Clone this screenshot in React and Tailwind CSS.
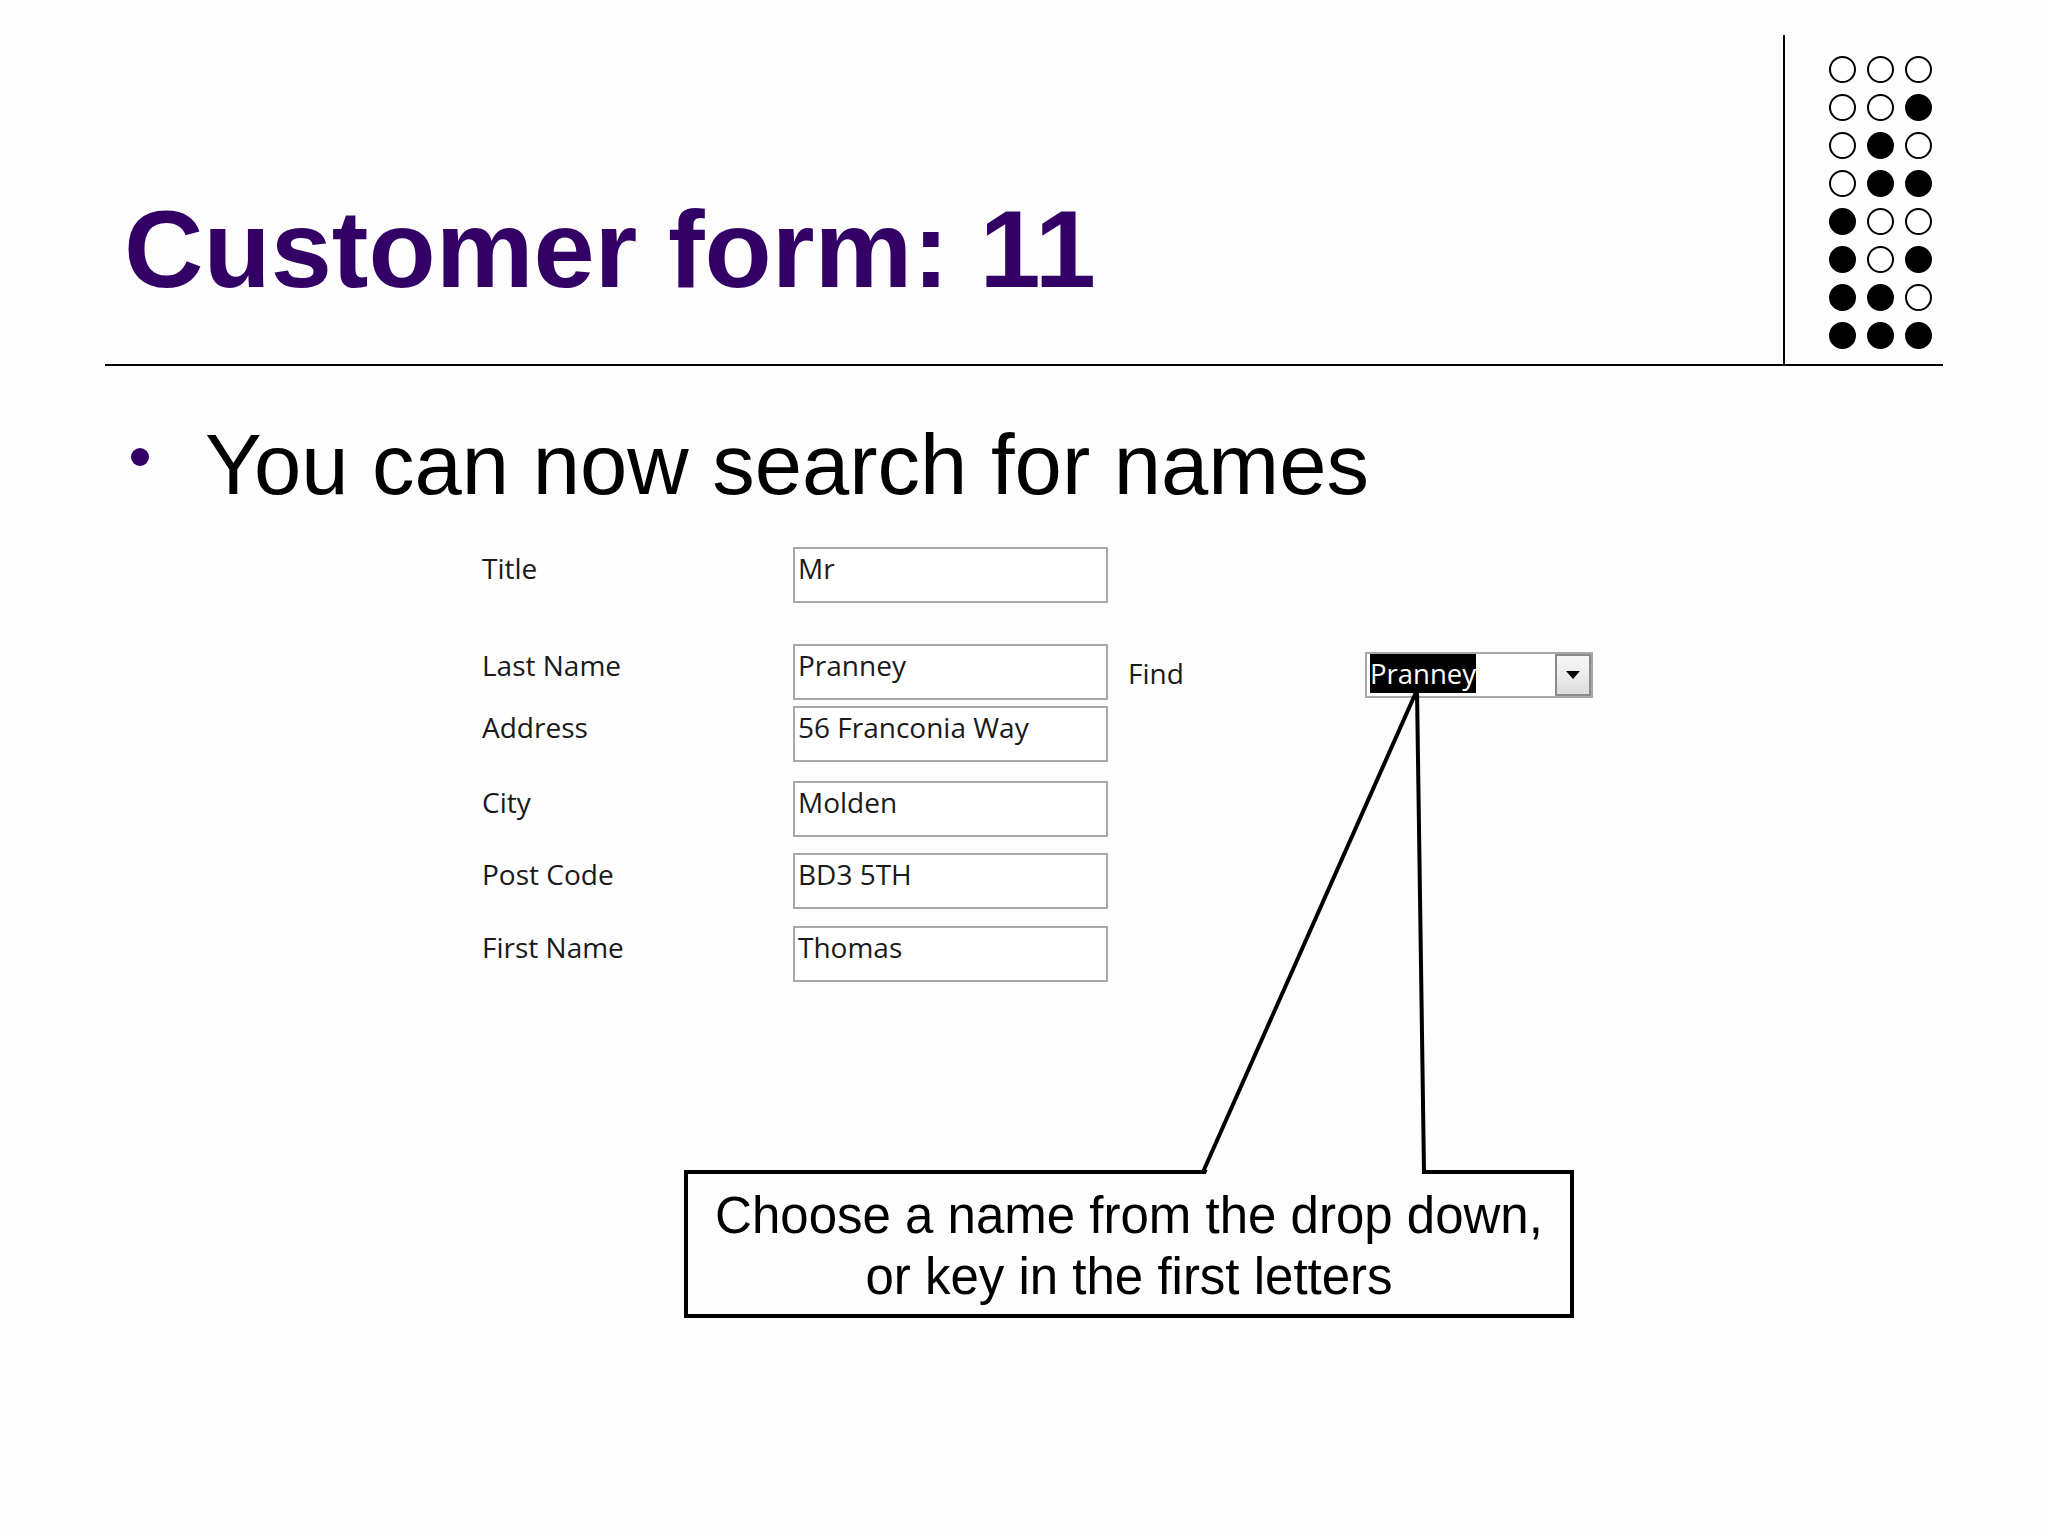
import React from 'react';

// binary counting pattern, one row per value 0..7
const dots = [0, 1, 2, 3, 4, 5, 6, 7];

const fields = [
    { label: 'Title', value: 'Mr', gap: 'mt-0' },
    { label: 'Last Name', value: 'Pranney', gap: 'mt-[41px]', find: true },
    { label: 'Address', value: '56 Franconia Way', gap: 'mt-[6px]' },
    { label: 'City', value: 'Molden', gap: 'mt-[19px]' },
    { label: 'Post Code', value: 'BD3 5TH', gap: 'mt-[16px]' },
    { label: 'First Name', value: 'Thomas', gap: 'mt-[17px]' },
];

const formFont = { fontFamily: '"Open Sans", "Noto Sans", sans-serif' };
const slideFont = { fontFamily: '"Liberation Sans", Arial, sans-serif' };

const DotGrid = () => (
    <div className="grid grid-cols-3 gap-x-[11px] gap-y-[11px] w-max">
        {dots.map(n =>
            [4, 2, 1].map(bit => (
                <span
                    key={`${n}-${bit}`}
                    className={`block w-[27px] h-[27px] rounded-full border-[2.5px] border-black ${n & bit ? 'bg-black' : 'bg-white'}`}
                />
            ))
        )}
    </div>
);

const FindCombo = () => (
    <div className="flex items-start ml-[20px]">
        <span className="mt-[15px] w-[237px] text-[28px] leading-none text-[#1a1a1a]">Find</span>
        <div className="mt-[8px] w-[228px] h-[46px] border-2 border-[#a8a8a8] bg-white flex">
            <div className="flex-1 pl-[3px]">
                <span className="inline-block bg-black text-white text-[27.5px] leading-[39px] h-[39px]">Pranney</span>
            </div>
            <div className="w-[36px] h-[42px] border-2 border-[#8a8a8a] bg-gradient-to-b from-[#f7f7f7] via-[#ececec] to-[#dcdcdc] flex items-center justify-center">
                <svg width="14" height="8" viewBox="0 0 14 8">
                    <path d="M0 0 H14 L7 8 Z" fill="#000" />
                </svg>
            </div>
        </div>
    </div>
);

const App = () => {
    return (
        <div className="relative w-[2048px] h-[1536px] bg-[#fdfdfd] overflow-hidden">
            {/* header with rule and dot column */}
            <div className="ml-[105px] pt-[35px] w-[1838px]">
                <div className="flex h-[331px] border-b-2 border-black">
                    <div className="flex-1 pl-[19px] pt-[159px]">
                        <h1 className="text-[110px] leading-none font-bold text-[#330066]" style={slideFont}>
                            Customer form: 11
                        </h1>
                    </div>
                    <div className="w-[160px] border-l-2 border-black pl-[44px] pt-[21px]">
                        <DotGrid />
                    </div>
                </div>
            </div>

            {/* bullet */}
            <div className="flex items-start mt-[56px] ml-[131px]" style={slideFont}>
                <span className="block mt-[26px] w-[18px] h-[18px] rounded-full bg-[#330066]" />
                <p className="ml-[56px] text-[85px] leading-none text-black">You can now search for names</p>
            </div>

            {/* form */}
            <div className="mt-[40px] ml-[482px] flex flex-col" style={formFont}>
                {fields.map(f => (
                    <div key={f.label} className={`flex items-start ${f.gap}`}>
                        <span className="mt-[7px] w-[311px] text-[28px] leading-none text-[#1a1a1a]">{f.label}</span>
                        <div className="w-[315px] h-[56px] border-2 border-[#a8a8a8] bg-white pl-[3px] pt-[5px] text-[28px] leading-none text-[#1a1a1a]">
                            {f.value}
                        </div>
                        {f.find && <FindCombo />}
                    </div>
                ))}
            </div>

            {/* callout */}
            <div className="mt-[188px] ml-[684px] w-[890px] h-[148px] border-4 border-black bg-[#fdfdfd] pt-[11px] text-center text-[51px] leading-[61px] text-black" style={slideFont}>
                <p>Choose a name from the drop down,</p>
                <p>or key in the first letters</p>
            </div>

            {/* callout pointer, drawn over the form */}
            <svg className="absolute inset-0 pointer-events-none" width="2048" height="1536" viewBox="0 0 2048 1536">
                <polygon points="1205,1176 1417,692 1422,1176" fill="#fdfdfd" />
                <polyline points="1203,1172 1417,690 1424,1172" fill="none" stroke="#000" strokeWidth="4" strokeLinejoin="miter" />
            </svg>
        </div>
    );
};

export default App;
